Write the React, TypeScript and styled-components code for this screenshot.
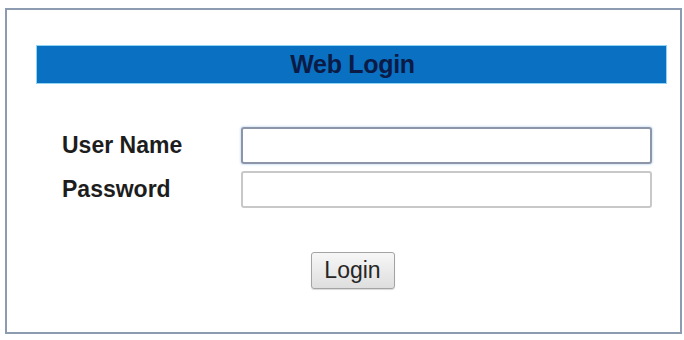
import React from "react";
import styled, { createGlobalStyle } from "styled-components";

const Global = createGlobalStyle`
  html, body { margin: 0; padding: 0; background: #ffffff; }
  body { font-family: "Liberation Sans", Arial, sans-serif; }
  * { box-sizing: border-box; }
`;

const Page = styled.div`
  width: 684px;
  height: 340px;
  padding: 8px 2px 6px 5px;
`;

const Frame = styled.div`
  width: 677px;
  height: 326px;
  border: 2px solid #8c9bb0;
  background: #ffffff;
  display: flex;
  flex-direction: column;
  padding: 36px 14px 0 30px;
`;

const TitleBar = styled.div`
  height: 37px;
  background: #0a70c2;
  box-shadow: 0 0 0 1px #8fd4f2;
  display: flex;
  align-items: center;
  justify-content: center;
  color: #0c1b45;
  font-weight: bold;
  font-size: 25px;
  letter-spacing: -0.3px;
  padding-left: 2px;
`;

const FormGrid = styled.div`
  margin-top: 44px;
  padding-left: 25px;
  display: grid;
  grid-template-columns: 179px 411px;
  row-gap: 7px;
  align-items: center;
`;

const Label = styled.label`
  font-weight: bold;
  font-size: 23px;
  color: #1d1d1d;
`;

const Field = styled.input<{ $focused?: boolean }>`
  height: 37px;
  width: 411px;
  border: 2px solid ${(p) => (p.$focused ? "#8d96a8" : "#c8c8c8")};
  border-radius: 3px;
  background: #ffffff;
  outline: none;
  box-shadow: ${(p) => (p.$focused ? "0 0 2px 1px #d6e6f6" : "none")};
  font-size: 18px;
  padding: 0 6px;
`;

const ButtonRow = styled.div`
  margin-top: 44px;
  display: flex;
  justify-content: center;
  padding-left: 2px;
`;

const LoginButton = styled.button`
  width: 84px;
  height: 37px;
  border: 1px solid #a3a3a3;
  border-radius: 3px;
  background: linear-gradient(#f7f7f7, #dedede);
  font-family: "Liberation Sans", Arial, sans-serif;
  font-size: 23px;
  color: #262626;
  padding: 0;
  box-shadow: 0 1px 1px rgba(0, 0, 0, 0.15);
`;

export default function App() {
  return (
    <Page>
      <Global />
      <Frame>
        <TitleBar>Web Login</TitleBar>
        <FormGrid>
          <Label htmlFor="user">User Name</Label>
          <Field id="user" type="text" $focused />
          <Label htmlFor="pass">Password</Label>
          <Field id="pass" type="password" />
        </FormGrid>
        <ButtonRow>
          <LoginButton type="button">Login</LoginButton>
        </ButtonRow>
      </Frame>
    </Page>
  );
}
